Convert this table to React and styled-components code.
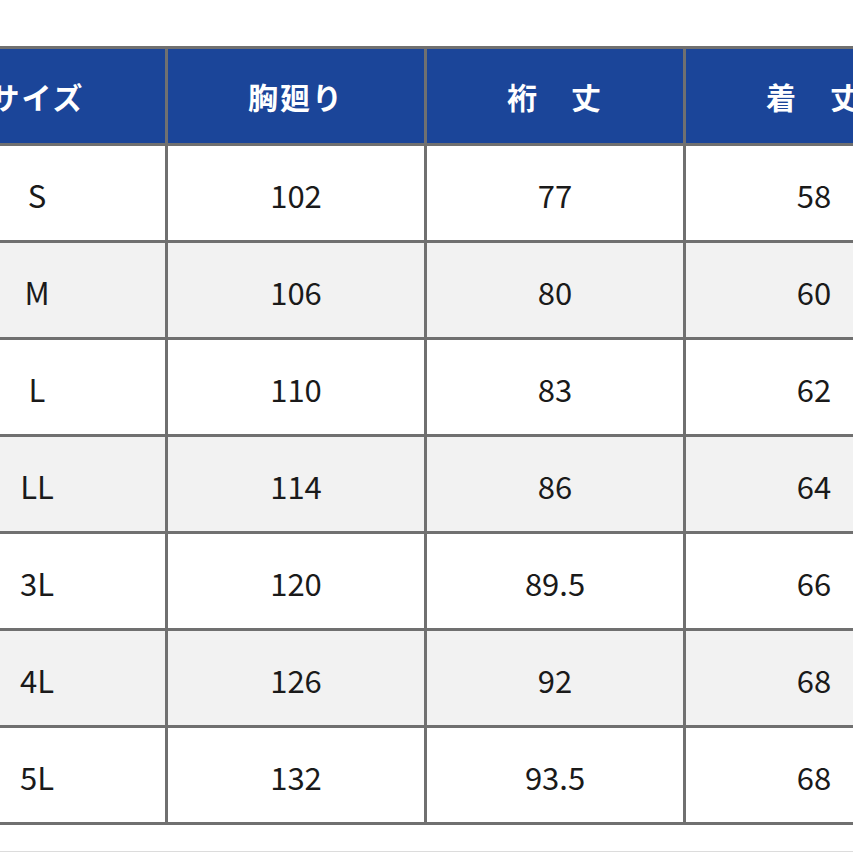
import React from "react";
import styled, { createGlobalStyle } from "styled-components";

const GlobalStyle = createGlobalStyle`
  html, body {
    margin: 0;
    padding: 0;
    background: #ffffff;
    overflow: hidden;
  }
  body {
    font-family: "Noto Sans CJK JP", "Noto Sans", sans-serif;
  }
`;

const Page = styled.div`
  width: 853px;
  height: 853px;
  overflow: hidden;
  padding-top: 46px;
  box-sizing: border-box;
`;

const Table = styled.div`
  display: grid;
  grid-template-columns: repeat(4, 256px);
  grid-auto-rows: 94px;
  gap: 3px;
  padding: 3px;
  margin-left: -94px;
  width: max-content;
  background: #707070;
`;

const HeadCell = styled.div`
  display: flex;
  align-items: center;
  justify-content: center;
  background: #1b4599;
  color: #ffffff;
  font-size: 30px;
  font-weight: 700;
  letter-spacing: 2px;
  white-space: pre;
`;

const Cell = styled.div`
  display: flex;
  align-items: center;
  justify-content: center;
  background: ${(p) => (p.$shade ? "#f2f2f2" : "#ffffff")};
  color: #1a1a1a;
  font-size: 31px;
  font-weight: 400;
  padding-top: 2px;
  box-sizing: border-box;
`;

const Rule = styled.div`
  margin-top: 26px;
  height: 1px;
  background: #dcdcdc;
`;

const headers = ["サイズ", "胸廻り", "裄　丈", "着　丈"];

const rows = [
  ["S", "102", "77", "58"],
  ["M", "106", "80", "60"],
  ["L", "110", "83", "62"],
  ["LL", "114", "86", "64"],
  ["3L", "120", "89.5", "66"],
  ["4L", "126", "92", "68"],
  ["5L", "132", "93.5", "68"],
];

export default function App() {
  return (
    <>
      <GlobalStyle />
      <Page>
        <Table>
          {headers.map((h) => (
            <HeadCell key={h}>{h}</HeadCell>
          ))}
          {rows.map((row, i) =>
            row.map((v, j) => (
              <Cell key={i + "-" + j} $shade={i % 2 === 1}>
                {v}
              </Cell>
            ))
          )}
        </Table>
        <Rule />
      </Page>
    </>
  );
}
